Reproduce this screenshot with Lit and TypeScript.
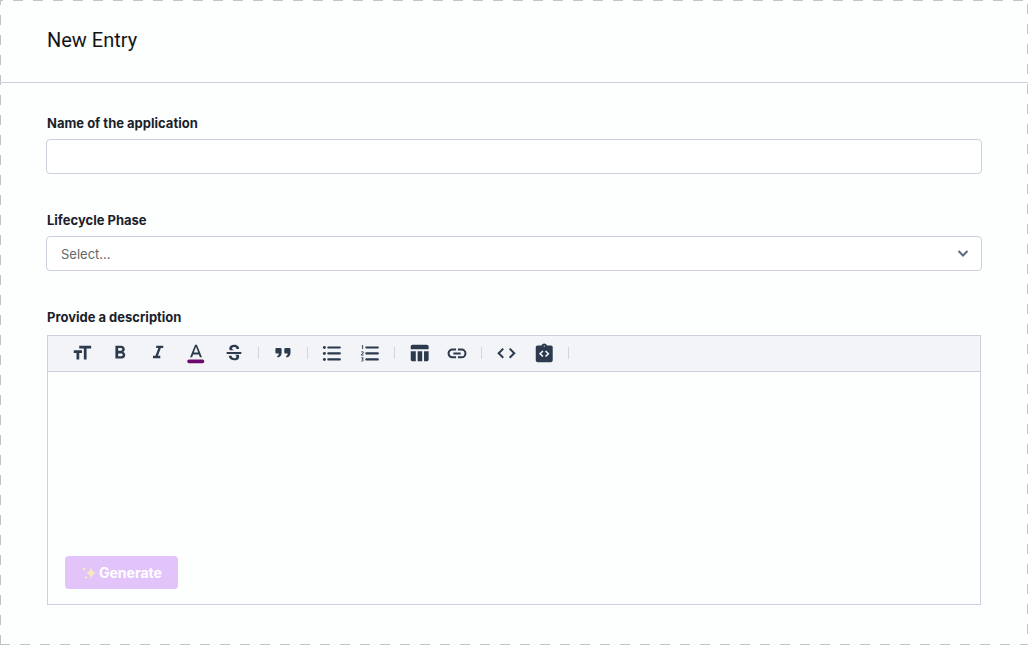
import { LitElement, html, css, svg, type TemplateResult } from "lit";
import { customElement } from "lit/decorators.js";

interface Tool {
  name: string;
  icon: TemplateResult;
}

const tool = (name: string, icon: TemplateResult): Tool => ({ name, icon });

const toolGroups: Tool[][] = [
  [
    tool("Text size", svg`<path d="M9 4v3h5v12h3V7h5V4H9zm-6 8h3v7h3v-7h3V9H3v3z"/>`),
    tool("Bold", svg`<path d="M15.6 10.79c.97-.67 1.65-1.77 1.65-2.79 0-2.26-1.75-4-4-4H7v14h7.04c2.09 0 3.71-1.7 3.71-3.79 0-1.52-.86-2.82-2.15-3.42zM10 6.5h3c.83 0 1.5.67 1.5 1.5s-.67 1.5-1.5 1.5h-3v-3zm3.5 9H10v-3h3.5c.83 0 1.5.67 1.5 1.5s-.67 1.5-1.5 1.5z"/>`),
    tool("Italic", svg`<path d="M10 4v2.500h2.400l-3.200 8.600H6.500v2.500h8v-2.500h-2.600l3.200-8.600h2.600V4z"/>`),
    tool("Text colour", svg`<path d="M11 3L5.500 16.500h2.250l1.120-3h6.250l1.120 3h2.250L13 3h-2zm-1.380 8.500L12 5.170l2.380 6.330H9.620z"/><rect class="swatch" x="2.500" y="19.200" width="18.500" height="4" rx="1.800"/>`),
    tool("Strikethrough", svg`<path d="M6.850 7.080C6.850 4.370 9.450 3 12.240 3c1.640 0 3 .49 3.900 1.280.77.65 1.460 1.730 1.460 3.240h-3.010c0-.31-.05-.59-.15-.85-.29-.86-1.200-1.280-2.250-1.280-1.860 0-2.340 1.020-2.340 1.700 0 .48.25.88.74 1.210.38.25.77.48 1.410.7H7.390c-.21-.34-.54-.89-.54-1.920zM20 11v2H4v-2zM12.620 14c1.150.45 1.960.75 1.960 1.970 0 1-.81 1.670-2.280 1.670-1.540 0-2.930-.54-2.930-2.510H6.400c0 .55.08 1.130.24 1.580.81 2.290 3.290 3.300 5.670 3.300 2.270 0 5.300-.89 5.300-4.050 0-.3-.01-1.160-.48-1.940z"/>`),
  ],
  [
    tool("Quote", svg`<path d="M5 6.500h4q1.500 0 1.500 1.500v3.500c0 3-1.700 5-4.300 5.500l-.7-1.700c1.200-.5 1.900-1.300 2-2.800H5q-1.300 0-1.300-1.300V8q0-1.500 1.300-1.500zm9.700 0h4q1.500 0 1.500 1.500v3.500c0 3-1.700 5-4.300 5.500l-.7-1.700c1.200-.5 1.900-1.300 2-2.800h-2.500q-1.300 0-1.300-1.300V8q0-1.500 1.300-1.500z"/>`),
  ],
  [
    tool("Bulleted list", svg`<circle cx="3.700" cy="6" r="1.600"/><circle cx="3.700" cy="12.500" r="1.600"/><circle cx="3.700" cy="19" r="1.600"/><path class="line" d="M8 6h12.500M8 12.500h12.500M8 19h12.500"/>`),
    tool("Numbered list", svg`<path class="line" d="M8 6H20.500M8 12.500H20.500M8 19H20.500"/><path class="thin" d="M3 4.500l1-.8v4M2.500 10.800h2.200v1l-2.200 2.500h2.500M2.500 17.300h2.200l-1.200 1.500q1.500.2 1.200 1.300t-2.200.6"/>`),
  ],
  [
    tool("Table", svg`<path d="M10.500 10h5v11h-5zM17.500 21h3c1.100 0 2-.9 2-2v-9h-5zM20.500 3H5c-1.100 0-2 .9-2 2v3H22.500V5c0-1.100-.9-2-2-2zM3 19c0 1.100.9 2 2 2H8.500V10H3z"/>`),
    tool("Link", svg`<path d="M3.900 12.500c0-1.710 1.390-3.100 3.100-3.100h4V7.200H7a5.300 5.300 0 000 10.600h4v-2.200H7c-1.710 0-3.100-1.390-3.100-3.100zM8 13.600h8v-2.200H8zM17 7.200h-4v2.200h4a3.100 3.100 0 010 6.200h-4v2.200h4a5.300 5.300 0 000-10.600z"/>`),
  ],
  [
    tool("Inline code", svg`<path class="chevrons" d="M9 7.200L4 12.200l5 5M16 7.200l5 5-5 5"/>`),
    tool("Code block", svg`<path d="M19.500 3.800h-4.200a3.300 3.300 0 00-6.100 0H5c-1.100 0-2 .9-2 2V20c0 1.100.9 2 2 2h14.500c1.100 0 2-.9 2-2V5.800c0-1.100-.9-2-2-2z"/><path class="cutout" d="M10.800 9.800l-3 3 3 3M13.700 9.800l3 3-3 3"/><circle class="hole" cx="12.250" cy="4.500" r=".6"/>`),
  ],
];

@customElement("app-root")
export class AppRoot extends LitElement {
  static styles = css`
    :host {
      --line: #cdd1df;
      --ink: #1b1f2a;
      --icon: #2b3a4d;
      --dash: #c2c4c2;
      --across: repeating-linear-gradient(90deg, var(--dash) 0 10px, transparent 10px 20px);
      --down: repeating-linear-gradient(180deg, var(--dash) 0 10px, transparent 10px 20px);
      display: block;
      min-height: 100vh;
      box-sizing: border-box;
      padding-bottom: 40px;
      font-family: Inter, "Liberation Sans", sans-serif;
      color: var(--ink);
      background:
        var(--across) -7px 0 / calc(100% + 20px) 1px no-repeat,
        var(--across) 0 100% / 100% 1px no-repeat,
        var(--down) 0 -5px / 1px calc(100% + 20px) no-repeat,
        var(--down) 100% 4px / 1px 100% no-repeat,
        #fdfefe;
    }
    * {
      box-sizing: border-box;
    }
    header {
      padding: 28px 47px 30px;
      border-bottom: 1px solid var(--line);
    }
    h1 {
      margin: 0;
      font-family: Roboto, "Liberation Sans", sans-serif;
      font-size: 20px;
      line-height: 24px;
      font-weight: 400;
      color: #141414;
    }
    form {
      display: grid;
      gap: 36px;
      padding: 30px 46px 0;
    }
    .field {
      display: grid;
      gap: 6px;
    }
    label {
      padding: 0 1px;
      font-size: 13px;
      line-height: 20px;
      font-weight: 700;
    }
    .box {
      width: 100%;
      height: 35px;
      padding: 0 14px;
      border: 1px solid var(--line);
      border-radius: 4px;
      background: #fff;
      font: inherit;
      font-size: 13px;
      color: #666;
      appearance: none;
    }
    .picker {
      display: grid;
      align-items: center;
    }
    .picker > * {
      grid-area: 1 / 1;
    }
    .picker svg {
      justify-self: end;
      margin-right: 12px;
      width: 14px;
      height: 14px;
      fill: none;
      stroke: #5b6880;
      stroke-width: 2;
      pointer-events: none;
    }
    .editor {
      display: flex;
      flex-direction: column;
      margin: 2px 1px 0;
      border: 1px solid var(--line);
    }
    .tools {
      display: flex;
      align-items: center;
      height: 36px;
      padding: 0 15px 1px;
      background: #f3f4f7;
      border-bottom: 1px solid var(--line);
    }
    .group {
      display: flex;
      align-items: center;
    }
    .group::after {
      content: "";
      width: 1px;
      height: 12px;
      margin: 0 5px;
      background: #d2d5de;
    }
    .tool {
      display: flex;
      padding: 0 8px;
      border: 0;
      background: none;
    }
    .tool svg {
      width: 22px;
      height: 22px;
      fill: var(--icon);
    }
    .tool .line,
    .tool .chevrons,
    .tool .thin,
    .tool .cutout {
      fill: none;
      stroke: var(--icon);
      stroke-width: 2.4;
      stroke-linecap: round;
    }
    .tool .chevrons {
      stroke-linecap: butt;
      stroke-width: 2.2;
    }
    .tool .thin {
      stroke-width: 1;
      stroke-linecap: butt;
    }
    .tool .cutout {
      stroke: #f3f4f7;
      stroke-linecap: butt;
      stroke-width: 1.8;
    }
    .tool .hole {
      fill: #f3f4f7;
    }
    .tool .swatch {
      fill: #6b0a6b;
    }
    textarea {
      display: block;
      width: 100%;
      height: 184px;
      padding: 14px 17px;
      border: 0;
      resize: none;
      background: none;
      font: inherit;
      font-size: 13px;
    }
    .actions {
      display: flex;
      padding: 0 17px 15px;
    }
    .generate {
      display: flex;
      align-items: center;
      gap: 2px;
      height: 33px;
      padding: 0 16px;
      border: 0;
      border-radius: 4px;
      background: #e2c4fa;
      color: #fff;
      font: 700 14px/20px Inter, sans-serif;
    }
    .generate svg {
      width: 16px;
      height: 16px;
      fill: #fbe7c0;
    }
  `;

  render() {
    return html`
      <header><h1>New Entry</h1></header>
      <form @submit=${(e: Event) => e.preventDefault()}>
        <div class="field">
          <label for="name">Name of the application</label>
          <input class="box" id="name" type="text" />
        </div>
        <div class="field">
          <label for="phase">Lifecycle Phase</label>
          <div class="picker">
            <select class="box" id="phase">
              <option>Select...</option>
            </select>
            <svg viewBox="0 0 14 14" aria-hidden="true"><path d="M2.500 4l4.500 4.500L11.500 4" /></svg>
          </div>
        </div>
        <div class="field">
          <label for="description">Provide a description</label>
          <div class="editor">
            <div class="tools" role="toolbar" aria-label="Formatting">
              ${toolGroups.map(
                (group) => html`<div class="group">
                  ${group.map(
                    (t) => html`<button class="tool" type="button" aria-label=${t.name}>
                      <svg viewBox="0 0 24 24" aria-hidden="true">${t.icon}</svg>
                    </button>`
                  )}
                </div>`
              )}
            </div>
            <textarea id="description"></textarea>
            <div class="actions">
              <button class="generate" type="button">
                <svg viewBox="0 0 16 16" aria-hidden="true">
                  <path d="M10 2q.8 5 5 6-4.200 1-5 6-.8-5-5-6 4.200-1 5-6zM3 1.500q.3 2 2 2.500-1.700.5-2 2.500-.3-2-2-2.500 1.700-.5 2-2.500zM5 10.500q.3 1.700 1.800 2-1.500.3-1.800 2-.3-1.700-1.800-2 1.500-.3 1.800-2z" />
                </svg>
                Generate
              </button>
            </div>
          </div>
        </div>
      </form>
    `;
  }
}
